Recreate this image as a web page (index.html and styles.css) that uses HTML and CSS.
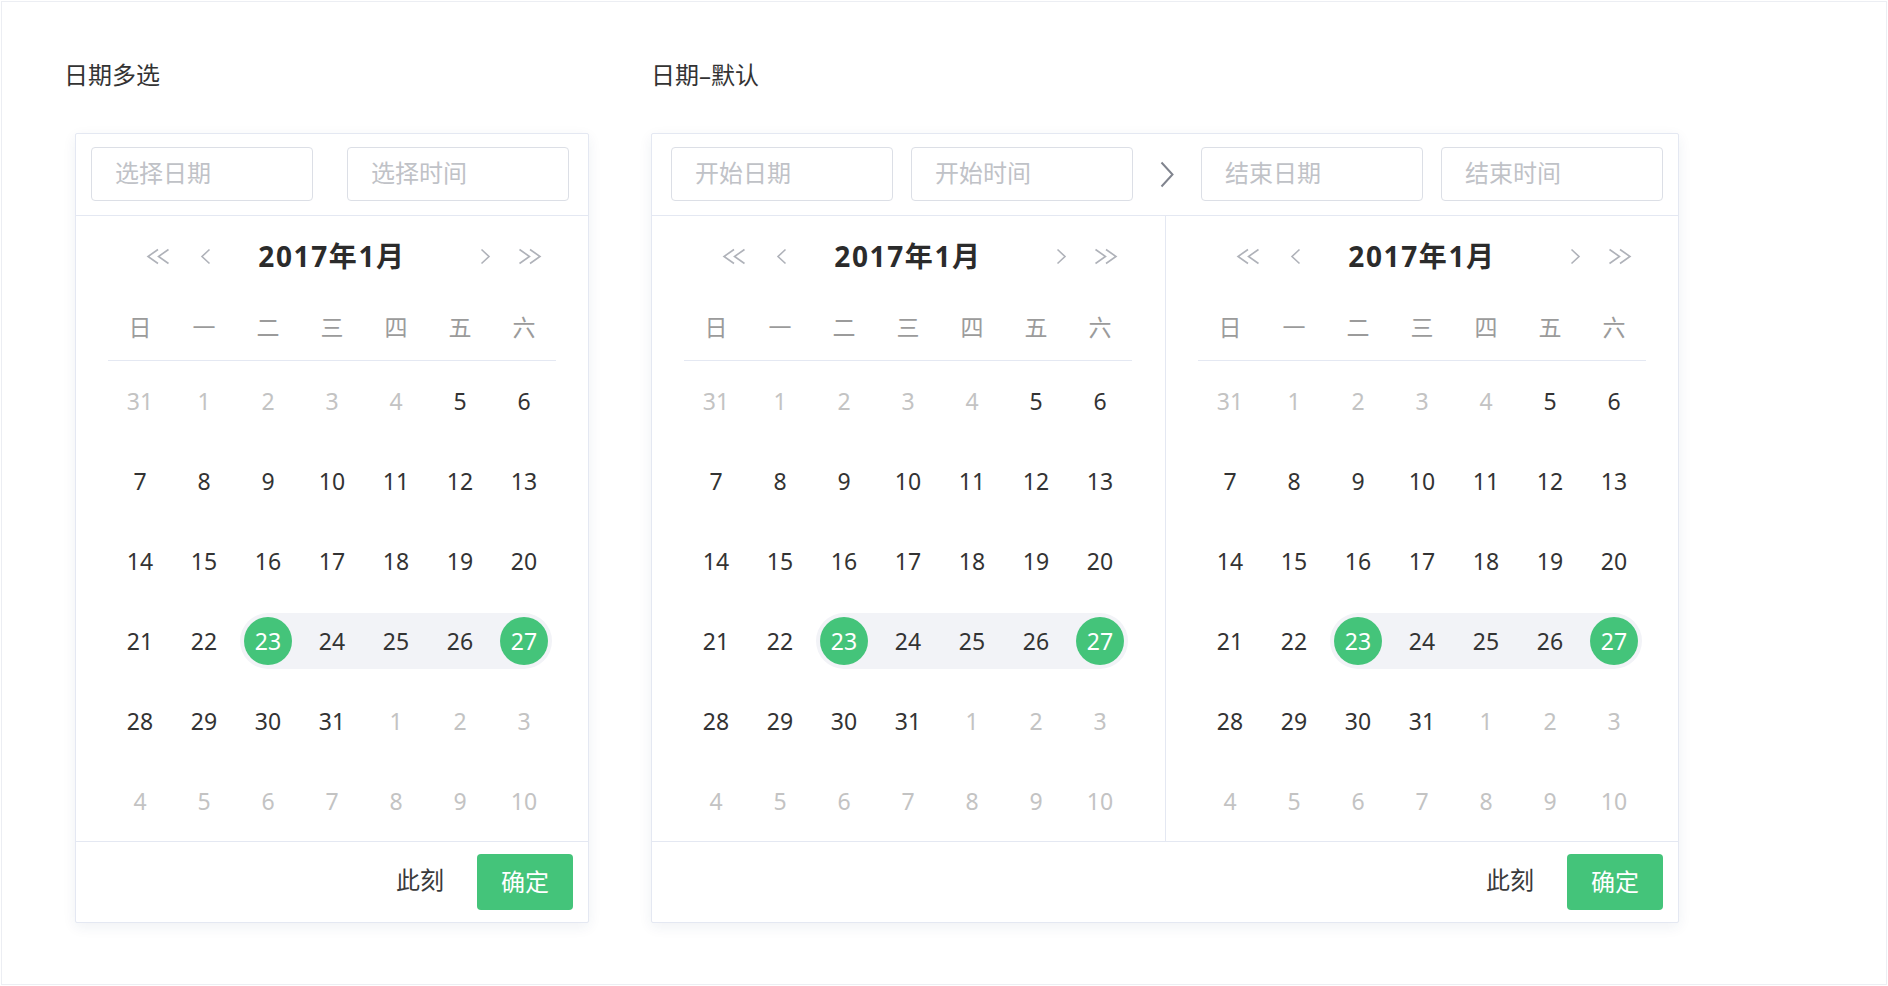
FILE: index.html
```html
<!DOCTYPE html>
<html lang="zh-CN">
<head>
<meta charset="utf-8">
<title>日期选择</title>
<link rel="stylesheet" href="styles.css">
</head>
<body>
<div class="frame">
  <section class="demo demo-multi">
    <h2 class="demo-title">日期多选</h2>
    <div class="card card-single">
      <div class="card-head">
        <div class="field">选择日期</div>
        <div class="field gap-34">选择时间</div>
      </div>
      <div class="card-body">
        <div class="panel">
          <div class="nav">
            <div class="nav-left">
              <svg class="ico-dbl" width="24" height="17" viewBox="0 0 24 17"><path d="M12 1.5 L2 8.5 L12 15.5 M22.5 1.5 L12.5 8.5 L22.5 15.5" fill="none" stroke="#afb2b9" stroke-width="1.6"/></svg>
              <svg class="ico-one ml-30" width="11" height="17" viewBox="0 0 11 17"><path d="M9.5 1.5 L2 8.5 L9.5 15.5" fill="none" stroke="#afb2b9" stroke-width="1.6"/></svg>
            </div>
            <div class="nav-title">2017年1月</div>
            <div class="nav-right">
              <svg class="ico-one" width="12" height="17" viewBox="0 0 12 17"><path d="M2.5 1.5 L10 8.5 L2.5 15.5" fill="none" stroke="#afb2b9" stroke-width="1.6"/></svg>
              <svg class="ico-dbl ml-27" width="24" height="17" viewBox="0 0 24 17"><path d="M1.5 1.5 L11.5 8.5 L1.5 15.5 M12 1.5 L22 8.5 L12 15.5" fill="none" stroke="#afb2b9" stroke-width="1.6"/></svg>
            </div>
          </div>
          <div class="week"><span>日</span><span>一</span><span>二</span><span>三</span><span>四</span><span>五</span><span>六</span></div>
          <div class="days">
            <span class="o">31</span><span class="o">1</span><span class="o">2</span><span class="o">3</span><span class="o">4</span><span>5</span><span>6</span>
            <span>7</span><span>8</span><span>9</span><span>10</span><span>11</span><span>12</span><span>13</span>
            <span>14</span><span>15</span><span>16</span><span>17</span><span>18</span><span>19</span><span>20</span>
            <span>21</span><span>22</span>
            <div class="band"><b class="sel">23</b><b>24</b><b>25</b><b>26</b><b class="sel">27</b></div>
            <span>28</span><span>29</span><span>30</span><span>31</span><span class="o">1</span><span class="o">2</span><span class="o">3</span>
            <span class="o">4</span><span class="o">5</span><span class="o">6</span><span class="o">7</span><span class="o">8</span><span class="o">9</span><span class="o">10</span>
          </div>
        </div>
      </div>
      <div class="card-foot">
        <span class="now">此刻</span>
        <button class="ok">确定</button>
      </div>
    </div>
  </section>

  <section class="demo demo-range">
    <h2 class="demo-title">日期–默认</h2>
    <div class="card card-double">
      <div class="card-head head-range">
        <div class="field">开始日期</div>
        <div class="field gap-18">开始时间</div>
        <div class="sep">
          <svg width="14" height="27" viewBox="0 0 14 27"><path d="M1.5 1.5 L12.5 13.5 L1.5 25.5" fill="none" stroke="#80848e" stroke-width="2"/></svg>
        </div>
        <div class="field">结束日期</div>
        <div class="field gap-18">结束时间</div>
      </div>
      <div class="card-body">
        <div class="panel panel-left">
          <div class="nav">
            <div class="nav-left">
              <svg class="ico-dbl" width="24" height="17" viewBox="0 0 24 17"><path d="M12 1.5 L2 8.5 L12 15.5 M22.5 1.5 L12.5 8.5 L22.5 15.5" fill="none" stroke="#afb2b9" stroke-width="1.6"/></svg>
              <svg class="ico-one ml-30" width="11" height="17" viewBox="0 0 11 17"><path d="M9.5 1.5 L2 8.5 L9.5 15.5" fill="none" stroke="#afb2b9" stroke-width="1.6"/></svg>
            </div>
            <div class="nav-title">2017年1月</div>
            <div class="nav-right">
              <svg class="ico-one" width="12" height="17" viewBox="0 0 12 17"><path d="M2.5 1.5 L10 8.5 L2.5 15.5" fill="none" stroke="#afb2b9" stroke-width="1.6"/></svg>
              <svg class="ico-dbl ml-27" width="24" height="17" viewBox="0 0 24 17"><path d="M1.5 1.5 L11.5 8.5 L1.5 15.5 M12 1.5 L22 8.5 L12 15.5" fill="none" stroke="#afb2b9" stroke-width="1.6"/></svg>
            </div>
          </div>
          <div class="week"><span>日</span><span>一</span><span>二</span><span>三</span><span>四</span><span>五</span><span>六</span></div>
          <div class="days">
            <span class="o">31</span><span class="o">1</span><span class="o">2</span><span class="o">3</span><span class="o">4</span><span>5</span><span>6</span>
            <span>7</span><span>8</span><span>9</span><span>10</span><span>11</span><span>12</span><span>13</span>
            <span>14</span><span>15</span><span>16</span><span>17</span><span>18</span><span>19</span><span>20</span>
            <span>21</span><span>22</span>
            <div class="band"><b class="sel">23</b><b>24</b><b>25</b><b>26</b><b class="sel">27</b></div>
            <span>28</span><span>29</span><span>30</span><span>31</span><span class="o">1</span><span class="o">2</span><span class="o">3</span>
            <span class="o">4</span><span class="o">5</span><span class="o">6</span><span class="o">7</span><span class="o">8</span><span class="o">9</span><span class="o">10</span>
          </div>
        </div>
        <div class="panel panel-right">
          <div class="nav">
            <div class="nav-left">
              <svg class="ico-dbl" width="24" height="17" viewBox="0 0 24 17"><path d="M12 1.5 L2 8.5 L12 15.5 M22.5 1.5 L12.5 8.5 L22.5 15.5" fill="none" stroke="#afb2b9" stroke-width="1.6"/></svg>
              <svg class="ico-one ml-30" width="11" height="17" viewBox="0 0 11 17"><path d="M9.5 1.5 L2 8.5 L9.5 15.5" fill="none" stroke="#afb2b9" stroke-width="1.6"/></svg>
            </div>
            <div class="nav-title">2017年1月</div>
            <div class="nav-right">
              <svg class="ico-one" width="12" height="17" viewBox="0 0 12 17"><path d="M2.5 1.5 L10 8.5 L2.5 15.5" fill="none" stroke="#afb2b9" stroke-width="1.6"/></svg>
              <svg class="ico-dbl ml-27" width="24" height="17" viewBox="0 0 24 17"><path d="M1.5 1.5 L11.5 8.5 L1.5 15.5 M12 1.5 L22 8.5 L12 15.5" fill="none" stroke="#afb2b9" stroke-width="1.6"/></svg>
            </div>
          </div>
          <div class="week"><span>日</span><span>一</span><span>二</span><span>三</span><span>四</span><span>五</span><span>六</span></div>
          <div class="days">
            <span class="o">31</span><span class="o">1</span><span class="o">2</span><span class="o">3</span><span class="o">4</span><span>5</span><span>6</span>
            <span>7</span><span>8</span><span>9</span><span>10</span><span>11</span><span>12</span><span>13</span>
            <span>14</span><span>15</span><span>16</span><span>17</span><span>18</span><span>19</span><span>20</span>
            <span>21</span><span>22</span>
            <div class="band"><b class="sel">23</b><b>24</b><b>25</b><b>26</b><b class="sel">27</b></div>
            <span>28</span><span>29</span><span>30</span><span>31</span><span class="o">1</span><span class="o">2</span><span class="o">3</span>
            <span class="o">4</span><span class="o">5</span><span class="o">6</span><span class="o">7</span><span class="o">8</span><span class="o">9</span><span class="o">10</span>
          </div>
        </div>
      </div>
      <div class="card-foot">
        <span class="now">此刻</span>
        <button class="ok">确定</button>
      </div>
    </div>
  </section>
</div>
</body>
</html>
```

FILE: styles.css
```css
* { box-sizing: border-box; }

html, body {
  margin: 0;
  padding: 0;
  background: #ffffff;
}

body {
  padding: 1px;
  font-family: "Noto Sans", "Noto Sans CJK SC", sans-serif;
  color: #333333;
}

.frame {
  width: 1886px;
  height: 984px;
  border: 1px solid #eceef3;
  padding: 61px 0 0 62px;
  display: flex;
  align-items: flex-start;
  gap: 59px;
}

.demo {
  display: flex;
  flex-direction: column;
}

.demo-title {
  margin: 0 0 46px 0;
  font-size: 24px;
  line-height: 24px;
  font-weight: 400;
  color: #333333;
}

.demo-range .demo-title { margin-left: 3px; }

.demo-multi .card { margin-left: 11px; }
.demo-range .card { margin-left: 3px; }

.card {
  background: #ffffff;
  border: 1px solid #e4e8f2;
  border-radius: 2px;
  box-shadow: 0 4px 14px rgba(30, 50, 100, 0.07);
}

.card-single { width: 514px; }
.card-double { width: 1028px; }

.card-head {
  display: flex;
  align-items: center;
  padding: 13px 19px 14px 15px;
  border-bottom: 1px solid #e4e8f2;
}

.head-range { padding-left: 19px; padding-right: 15px; }

.field {
  width: 222px;
  height: 54px;
  flex: none;
  border: 1px solid #dcdfe6;
  border-radius: 4px;
  padding: 0 0 5px 23px;
  display: flex;
  align-items: center;
  font-size: 24px;
  color: #c0c2c7;
}

.gap-34 { margin-left: 34px; }
.gap-18 { margin-left: 18px; }

.sep {
  width: 68px;
  flex: none;
  display: flex;
  justify-content: center;
  align-items: center;
}

.card-body {
  display: flex;
}

.panel {
  width: 512px;
  padding: 0 32px;
}

.panel-left {
  width: 514px;
  padding-right: 33px;
  border-right: 1px solid #e4e8f2;
}

.nav {
  height: 80px;
  display: grid;
  grid-template-columns: 1fr auto 1fr;
  align-items: center;
}

.nav-left {
  display: flex;
  align-items: center;
  padding-left: 38px;
  justify-self: start;
}

.nav-right {
  display: flex;
  align-items: center;
  padding-right: 14px;
  justify-self: end;
}

.nav svg { display: block; }
.ml-30 { margin-left: 30px; }
.ml-27 { margin-left: 27px; }

.nav-title {
  font-size: 28px;
  font-weight: 700;
  letter-spacing: 1.6px;
  color: #2b2b2b;
  line-height: 1;
}

.week {
  display: grid;
  grid-template-columns: repeat(7, 64px);
  height: 65px;
  border-bottom: 1px solid #e4e8f2;
}

.week span {
  display: flex;
  align-items: center;
  justify-content: center;
  padding-bottom: 5px;
  font-size: 23px;
  color: #9b9b9b;
}

.days {
  display: grid;
  grid-template-columns: repeat(7, 64px);
  grid-auto-rows: 80px;
}

.days span {
  display: flex;
  align-items: center;
  justify-content: center;
  font-size: 23px;
  color: #333333;
}

.days span.o { color: #c3c3c3; }

.band {
  grid-column: span 5;
  margin: 12px 4px;
  height: 56px;
  border-radius: 28px;
  background: #f2f3f7;
  padding: 4px;
  display: flex;
  justify-content: space-between;
  align-items: center;
}

.band b {
  width: 48px;
  height: 48px;
  display: flex;
  align-items: center;
  justify-content: center;
  font-weight: 400;
  font-size: 23px;
  color: #333333;
  border-radius: 50%;
}

.band b.sel {
  background: #44c47a;
  color: #ffffff;
}

.card-foot {
  height: 81px;
  border-top: 1px solid #e4e8f2;
  display: flex;
  align-items: center;
  justify-content: flex-end;
  padding-right: 15px;
}

.now {
  font-size: 24px;
  line-height: 24px;
  color: #3a3a3a;
  margin: 0 33px 4px 0;
}

.ok {
  width: 96px;
  height: 56px;
  border: none;
  border-radius: 4px;
  background: #44c47a;
  color: #ffffff;
  font-family: "Noto Sans", "Noto Sans CJK SC", sans-serif;
  font-size: 24px;
  padding: 0 0 4px 0;
}
```
